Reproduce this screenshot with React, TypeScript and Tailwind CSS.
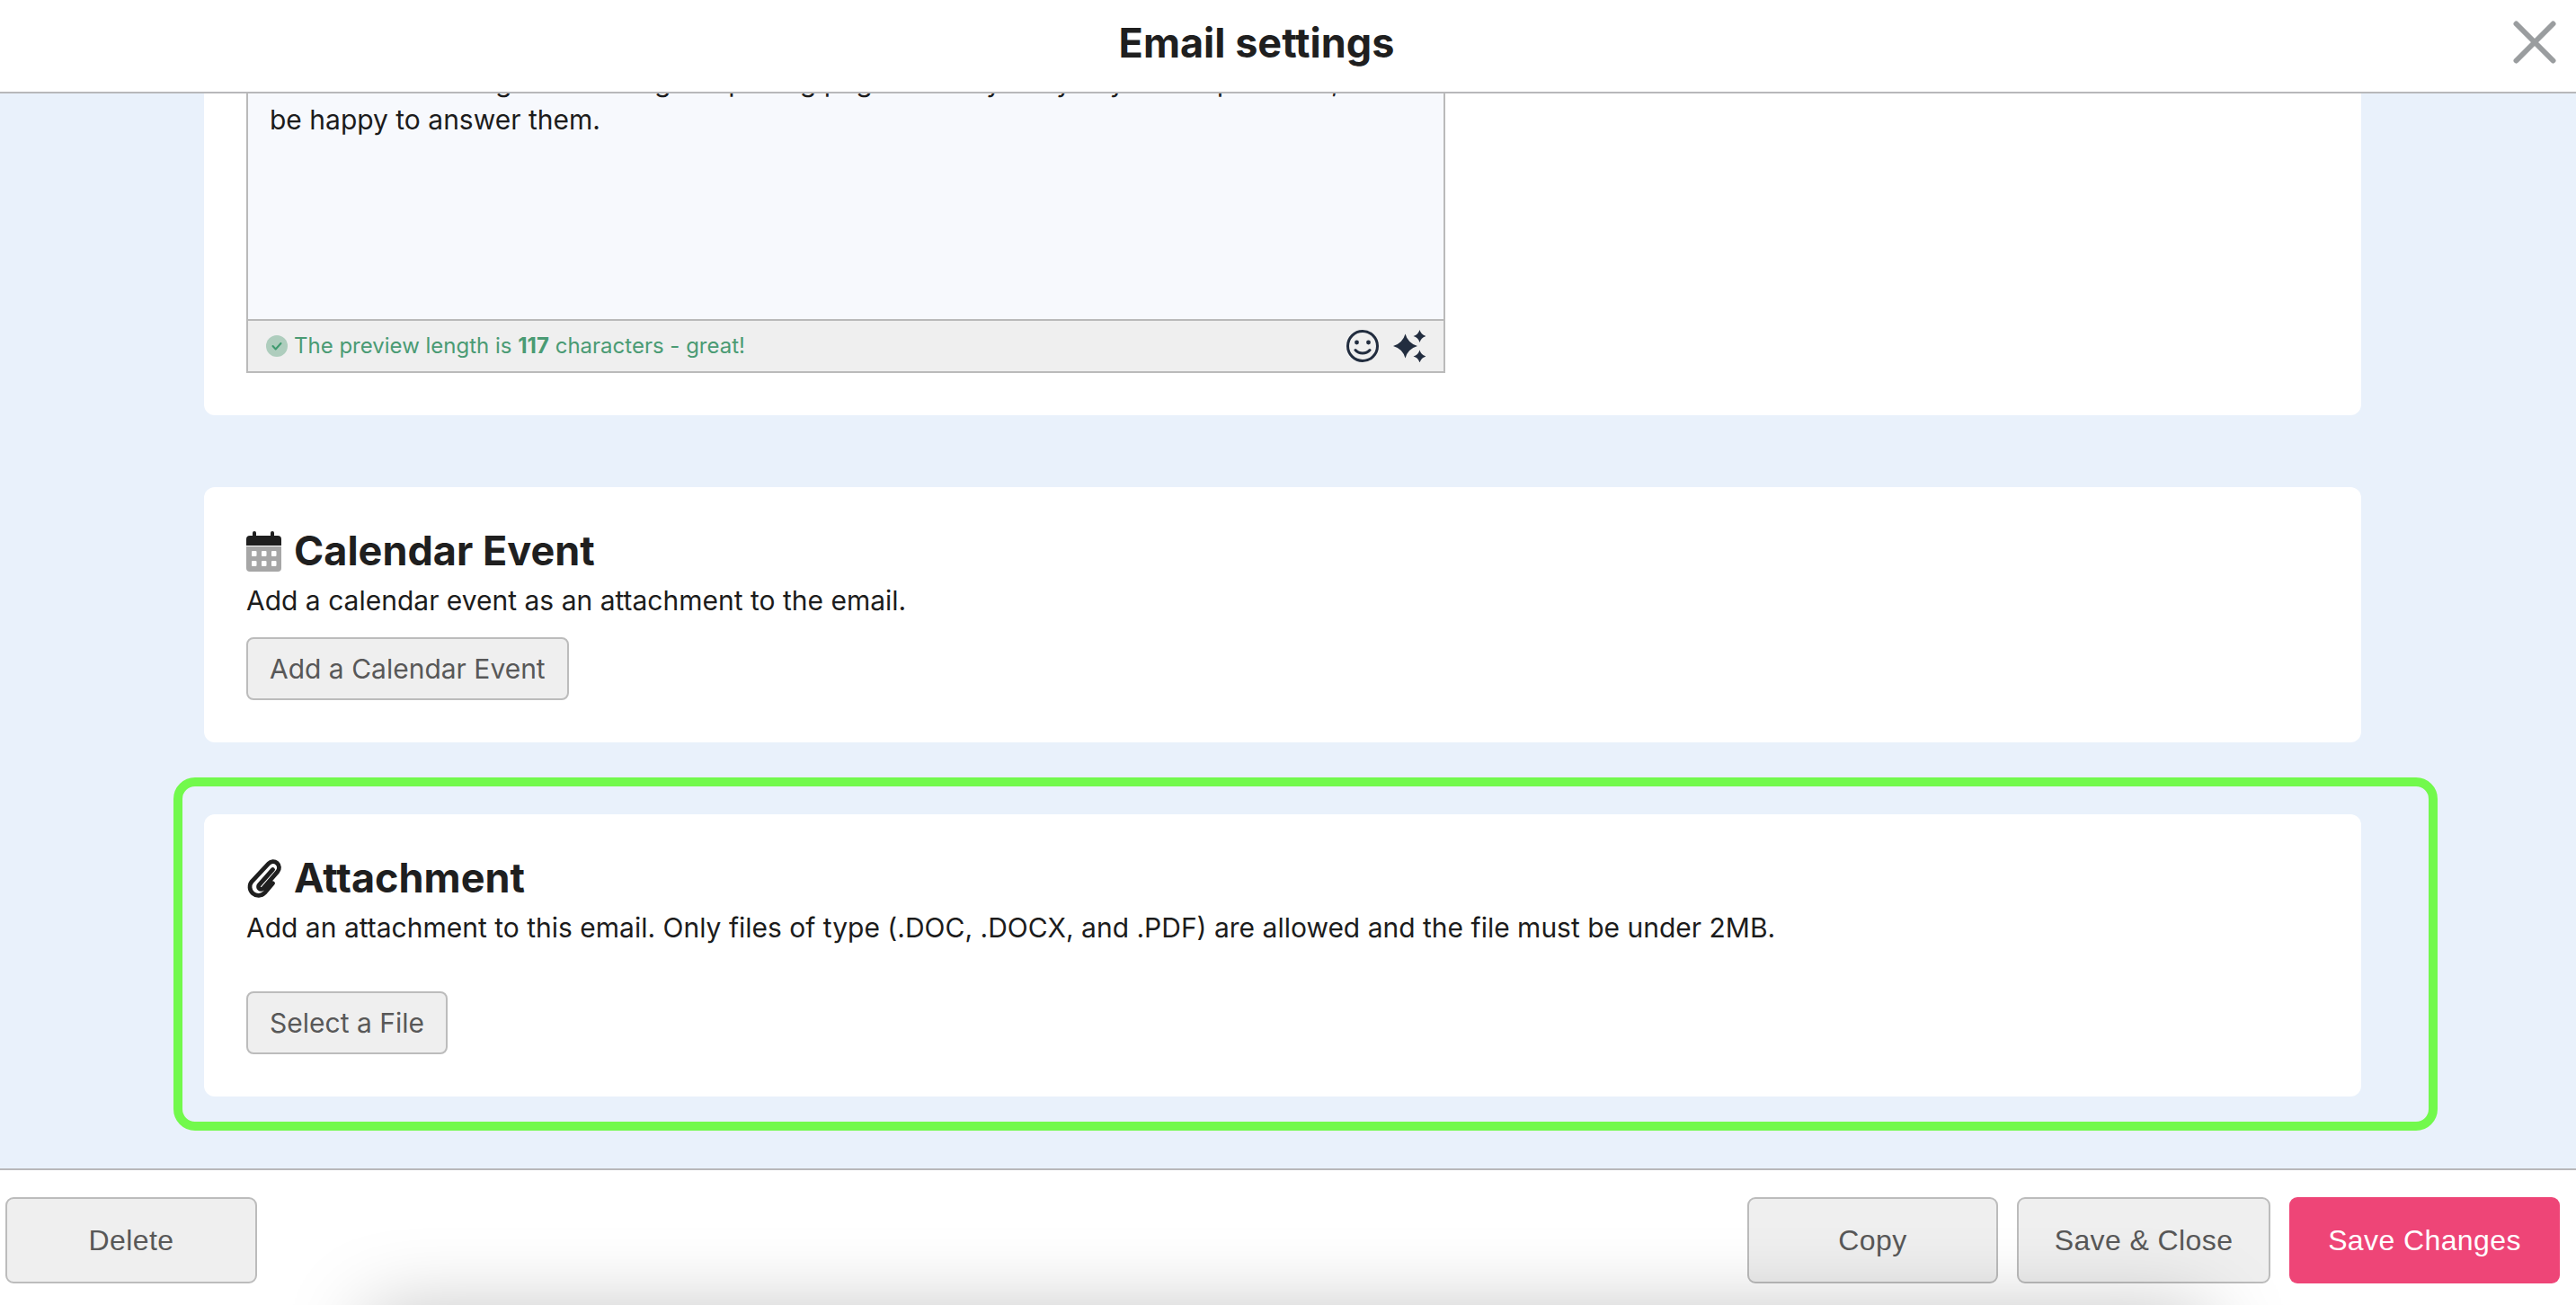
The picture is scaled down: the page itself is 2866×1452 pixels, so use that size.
const Star = ({ cx, cy, r }: { cx: number; cy: number; r: number }) => (
  <path
    d={`M${cx} ${cy - r}Q${cx + r * 0.22} ${cy - r * 0.22} ${cx + r} ${cy}Q${cx + r * 0.22} ${cy + r * 0.22} ${cx} ${cy + r}Q${cx - r * 0.22} ${cy + r * 0.22} ${cx - r} ${cy}Q${cx - r * 0.22} ${cy - r * 0.22} ${cx} ${cy - r}Z`}
    fill="#222d3f"
  />
);

const CalendarIcon = () => (
  <svg width="39" height="45" viewBox="0 0 39 45" className="shrink-0">
    <rect x="7" y="0" width="4" height="8" rx="2" fill="#1f1f1f" />
    <rect x="27" y="0" width="4" height="8" rx="2" fill="#1f1f1f" />
    <path d="M0 16V9a4 4 0 0 1 4-4h31a4 4 0 0 1 4 4v7z" fill="#1f1f1f" />
    <path d="M0 17h39v24a4 4 0 0 1-4 4H4a4 4 0 0 1-4-4z" fill="#a6a6a6" />
    {[6, 17, 28].map((x) =>
      [22, 33].map((y) => (
        <rect key={`${x}-${y}`} x={x} y={y} width="5.5" height="6" rx="1" fill="#fff" />
      ))
    )}
  </svg>
);

const PaperclipIcon = () => (
  <svg width="40" height="44" viewBox="0 0 40 46" fill="none" className="shrink-0">
    <path
      d="M30 13L14 31a3 3 0 0 0 4.6 4L35.5 15.5a7 7 0 0 0-10.5-9.3L5.5 27a10 10 0 0 0 15 13.2L30 29"
      stroke="#1f1f1f"
      strokeWidth="5"
      strokeLinecap="round"
      strokeLinejoin="round"
    />
  </svg>
);

const GrayButton = ({ label }: { label: string }) => (
  <button className="h-[70px] px-[24px] bg-[#efefef] border-2 border-[#bcbcbc] rounded-[8px] text-[30px] text-[#585858]">
    {label}
  </button>
);

const FooterButton = ({ label, width }: { label: string; width: string }) => (
  <button
    className={`h-[96px] ${width} bg-[#efefef] border-2 border-[#bcbcbc] rounded-[9px] text-[32px] tracking-[0.4px] text-[#585858] font-['Liberation_Sans',sans-serif]`}
  >
    {label}
  </button>
);

const App = () => {
  return (
    <div className="relative flex flex-col h-[1452px] overflow-hidden bg-white font-['Inter',sans-serif] text-[#1c1c1c]">
      {/* Header */}
      <header className="flex items-center h-[104px] shrink-0 border-b-2 border-[#b8b8ba] bg-white">
        <h1 className="flex-1 text-center text-[45px] leading-[50px] font-bold text-[#1f1f1f] pb-[7px]">
          Email settings
        </h1>
        <div className="w-[70px] shrink-0 pb-[8px]">
          <svg width="48" height="48" viewBox="0 0 48 48" fill="none">
            <path d="M3.5 3.5l41 41M44.5 3.5l-41 41" stroke="#9a9d9f" strokeWidth="6" strokeLinecap="round" />
          </svg>
        </div>
      </header>

      {/* Scrolled content */}
      <main className="flex-1 min-h-0 overflow-hidden flex flex-col justify-end gap-[80px] bg-[#e9f1fb] pl-[227px] pr-[239px] pb-[80px]">
        <section className="shrink-0 bg-white rounded-[12px] px-[47px] pt-[47px] pb-[47px]">
          <div className="w-[1334px] border-2 border-[#bababa]">
            <div className="h-[298px] bg-[#f7f9fd] px-[24px] pt-[13px] text-[30px] leading-[42px] text-[#1c1c1c] whitespace-nowrap overflow-hidden">
              <div>Thanks for viewing and reading our pricing page. And if you by any other questions, I'll</div>
              <div>be happy to answer them.</div>
            </div>
            <div className="flex items-center justify-between h-[58px] border-t-2 border-[#bababa] bg-[#efefef] pl-[20px] pr-[20px]">
              <div className="flex items-center gap-[7px] text-[24px] text-[#4a9b74]">
                <svg width="24" height="24" viewBox="0 0 24 24">
                  <circle cx="12" cy="12" r="12" fill="#aecdbd" />
                  <path d="M7.5 12l3.2 3.5 5.8-6.5" fill="none" stroke="#3f9a6f" strokeWidth="2" strokeLinecap="round" strokeLinejoin="round" />
                </svg>
                <span>
                  The preview length is <b className="font-bold">117</b> characters - great!
                </span>
              </div>
              <div className="flex items-center gap-[16px]">
                <svg width="36" height="36" viewBox="0 0 36 36" fill="none">
                  <circle cx="18" cy="18" r="16.5" stroke="#222d3f" strokeWidth="3" />
                  <circle cx="11.5" cy="14" r="2.4" fill="#222d3f" />
                  <circle cx="24.5" cy="14" r="2.4" fill="#222d3f" />
                  <path d="M10 22.5c4 4.5 12 4.5 16 0" stroke="#222d3f" strokeWidth="3" strokeLinecap="round" />
                </svg>
                <svg width="36" height="36" viewBox="0 0 36 36">
                  <Star cx={13.5} cy={18} r={13.5} />
                  <Star cx={29.5} cy={7} r={7} />
                  <Star cx={29.5} cy={29.5} r={7} />
                </svg>
              </div>
            </div>
          </div>
        </section>

        <section className="shrink-0 bg-white rounded-[12px] px-[47px] pt-[46px] pb-[47px]">
          <div className="flex items-center gap-[14px] h-[50px]">
            <CalendarIcon />
            <h2 className="text-[45px] leading-[50px] font-bold text-[#1f1f1f]">Calendar Event</h2>
          </div>
          <p className="mt-[9px] text-[30px] leading-[42px]">Add a calendar event as an attachment to the email.</p>
          <div className="mt-[20px]">
            <GrayButton label="Add a Calendar Event" />
          </div>
        </section>

        <section className="relative shrink-0 bg-white rounded-[12px] px-[47px] pt-[46px] pb-[47px]">
          {/* Highlight frame */}
          <div className="absolute top-[-41px] bottom-[-38px] left-[-34px] right-[-85px] border-[10px] border-[#72f94c] rounded-[24px] pointer-events-none" />
          <div className="flex items-center gap-[13px] h-[50px]">
            <PaperclipIcon />
            <h2 className="text-[45px] leading-[50px] font-bold text-[#1f1f1f]">Attachment</h2>
          </div>
          <p className="mt-[9px] text-[30px] leading-[42px]">
            Add an attachment to this email. Only files of type (.DOC, .DOCX, and .PDF) are allowed and the file must be under 2MB.
          </p>
          <div className="mt-[50px]">
            <GrayButton label="Select a File" />
          </div>
        </section>
      </main>

      {/* Footer */}
      <footer className="flex items-start justify-between h-[152px] shrink-0 border-t-2 border-[#b8b8ba] bg-white pl-[6px] pr-[18px] pt-[30px]">
        <FooterButton label="Delete" width="w-[280px]" />
        <div className="flex gap-[21px]">
          <FooterButton label="Copy" width="w-[279px]" />
          <FooterButton label="Save & Close" width="w-[282px]" />
          <button className="h-[96px] w-[301px] bg-[#ee4577] rounded-[9px] text-[32px] tracking-[0.4px] text-white font-['Liberation_Sans',sans-serif]">
            Save Changes
          </button>
        </div>
      </footer>

      {/* Shadow of the panel below the fold */}
      <div className="absolute left-[440px] right-[440px] top-[1490px] h-[60px] shadow-[0_0_90px_30px_rgba(0,0,0,0.25)] pointer-events-none" />
    </div>
  );
};

export default App;
